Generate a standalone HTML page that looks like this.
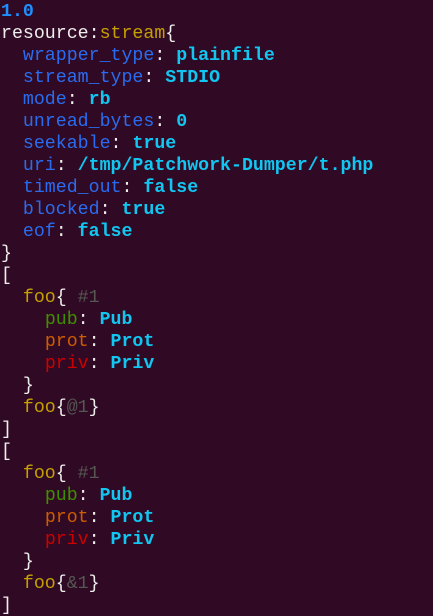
<!DOCTYPE html>
<html><head><meta charset="utf-8"><style>
html,body{margin:0;background:#300a24;width:433px;height:616px;overflow:hidden}
pre{margin:0;padding:1px 0 0 1px;font-family:"Liberation Mono","DejaVu Sans Mono",monospace;font-size:18.25px;line-height:22px;color:#eeeeec}
.n{color:#1e8fff;font-weight:bold}
.k{color:#2a6cf0}
.v{color:#11c6f0;font-weight:bold}
.c{color:#c4a000}
.g{color:#3f9000}
.o{color:#ce5c00}
.r{color:#cc0000}
.m{color:#555753}
</style></head><body><pre><span class="n">1.0</span>
resource:<span class="c">stream</span>{
  <span class="k">wrapper_type</span>: <span class="v">plainfile</span>
  <span class="k">stream_type</span>: <span class="v">STDIO</span>
  <span class="k">mode</span>: <span class="v">rb</span>
  <span class="k">unread_bytes</span>: <span class="v">0</span>
  <span class="k">seekable</span>: <span class="v">true</span>
  <span class="k">uri</span>: <span class="v">/tmp/Patchwork-Dumper/t.php</span>
  <span class="k">timed_out</span>: <span class="v">false</span>
  <span class="k">blocked</span>: <span class="v">true</span>
  <span class="k">eof</span>: <span class="v">false</span>
}
[
  <span class="c">foo</span>{ <span class="m">#1</span>
    <span class="g">pub</span>: <span class="v">Pub</span>
    <span class="o">prot</span>: <span class="v">Prot</span>
    <span class="r">priv</span>: <span class="v">Priv</span>
  }
  <span class="c">foo</span>{<span class="m">@1</span>}
]
[
  <span class="c">foo</span>{ <span class="m">#1</span>
    <span class="g">pub</span>: <span class="v">Pub</span>
    <span class="o">prot</span>: <span class="v">Prot</span>
    <span class="r">priv</span>: <span class="v">Priv</span>
  }
  <span class="c">foo</span>{<span class="m">&amp;1</span>}
]</pre></body></html>
